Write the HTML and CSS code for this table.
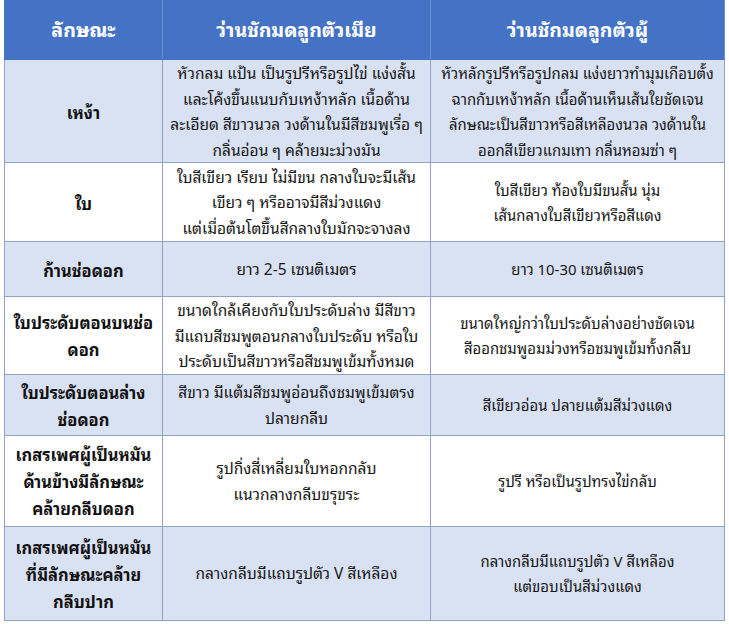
FILE: index.html
```
<!DOCTYPE html>
<html lang="th">
<head>
<meta charset="utf-8">
<link rel="stylesheet" href="styles.css">
</head>
<body>
<table class="cmp">
  <colgroup><col class="c1"><col class="c2"><col class="c3"></colgroup>
  <thead>
    <tr class="r-head"><th>ลักษณะ</th><th>ว่านชักมดลูกตัวเมีย</th><th>ว่านชักมดลูกตัวผู้</th></tr>
  </thead>
  <tbody>
    <tr class="r1 alt"><th>เหง้า</th><td>หัวกลม แป้น เป็นรูปรีหรือรูปไข่ แง่งสั้น<br>และโค้งขึ้นแนบกับเหง้าหลัก เนื้อด้าน<br>ละเอียด สีขาวนวล วงด้านในมีสีชมพูเรื่อ ๆ<br>กลิ่นอ่อน ๆ คล้ายมะม่วงมัน</td><td class="m">หัวหลักรูปรีหรือรูปกลม แง่งยาวทำมุมเกือบตั้ง<br>ฉากกับเหง้าหลัก เนื้อด้านเห็นเส้นใยชัดเจน<br>ลักษณะเป็นสีขาวหรือสีเหลืองนวล วงด้านใน<br>ออกสีเขียวแกมเทา กลิ่นหอมซ่า ๆ</td></tr>
    <tr class="r2"><th>ใบ</th><td>ใบสีเขียว เรียบ ไม่มีขน กลางใบจะมีเส้น<br>เขียว ๆ หรืออาจมีสีม่วงแดง<br>แต่เมื่อต้นโตขึ้นสีกลางใบมักจะจางลง</td><td class="m">ใบสีเขียว ท้องใบมีขนสั้น นุ่ม<br>เส้นกลางใบสีเขียวหรือสีแดง</td></tr>
    <tr class="r3 alt"><th>ก้านช่อดอก</th><td>ยาว 2-5 เซนติเมตร</td><td class="m">ยาว 10-30 เซนติเมตร</td></tr>
    <tr class="r4"><th>ใบประดับตอนบนช่อ<br>ดอก</th><td>ขนาดใกล้เคียงกับใบประดับล่าง มีสีขาว<br>มีแถบสีชมพูตอนกลางใบประดับ หรือใบ<br>ประดับเป็นสีขาวหรือสีชมพูเข้มทั้งหมด</td><td class="m">ขนาดใหญ่กว่าใบประดับล่างอย่างชัดเจน<br>สีออกชมพูอมม่วงหรือชมพูเข้มทั้งกลีบ</td></tr>
    <tr class="r5 alt"><th>ใบประดับตอนล่าง<br>ช่อดอก</th><td>สีขาว มีแต้มสีชมพูอ่อนถึงชมพูเข้มตรง<br>ปลายกลีบ</td><td class="m">สีเขียวอ่อน ปลายแต้มสีม่วงแดง</td></tr>
    <tr class="r6"><th>เกสรเพศผู้เป็นหมัน<br>ด้านข้างมีลักษณะ<br>คล้ายกลีบดอก</th><td>รูปกิ่งสี่เหลี่ยมใบหอกกลับ<br>แนวกลางกลีบขรุขระ</td><td class="m">รูปรี หรือเป็นรูปทรงไข่กลับ</td></tr>
    <tr class="r7 alt"><th>เกสรเพศผู้เป็นหมัน<br>ที่มีลักษณะคล้าย<br>กลีบปาก</th><td>กลางกลีบมีแถบรูปตัว V สีเหลือง</td><td class="m">กลางกลีบมีแถบรูปตัว V สีเหลือง<br>แต่ขอบเป็นสีม่วงแดง</td></tr>
  </tbody>
</table>
</body>
</html>
```
FILE: styles.css
```
html, body {
  margin: 0;
  padding: 0;
  background: #ffffff;
}
body {
  padding-left: 4px;
  font-family: "Noto Sans Thai Looped", Loma, Garuda, Waree, Tahoma, "Noto Sans Thai", "Noto Sans", sans-serif;
  color: #161616;
}
.cmp {
  border-collapse: collapse;
  width: 720px;
  table-layout: fixed;
}
.c1 { width: 158px; }
.c2 { width: 268px; }
.c3 { width: 294px; }
.cmp th, .cmp td {
  border: 1px solid #8fa3c4;
  text-align: center;
  vertical-align: middle;
  padding: 0 2px;
  font-size: 15.5px;
  line-height: 25.5px;
  white-space: nowrap;
}
.cmp td.m {
  font-size: 14.9px;
}
.cmp tbody th {
  font-weight: bold;
  font-size: 16.5px;
  line-height: 27px;
  color: #111111;
}
.r-head th {
  background: #4472c4;
  color: #ffffff;
  font-size: 19.5px;
  font-weight: bold;
  height: 56px;
  padding-bottom: 2px;
  border-color: #4472c4;
  border-right-color: #6d8fcf;
}
.alt th, .alt td { background: #d9e2f3; }
.r1 > * { height: 102px; }
.r2 > * { height: 78px; }
.r3 > * { height: 54px; }
.r4 > * { height: 76px; }
.r5 > * { height: 60px; }
.r6 > * { height: 90px; }
.r7 > * { height: 93px; }
```
